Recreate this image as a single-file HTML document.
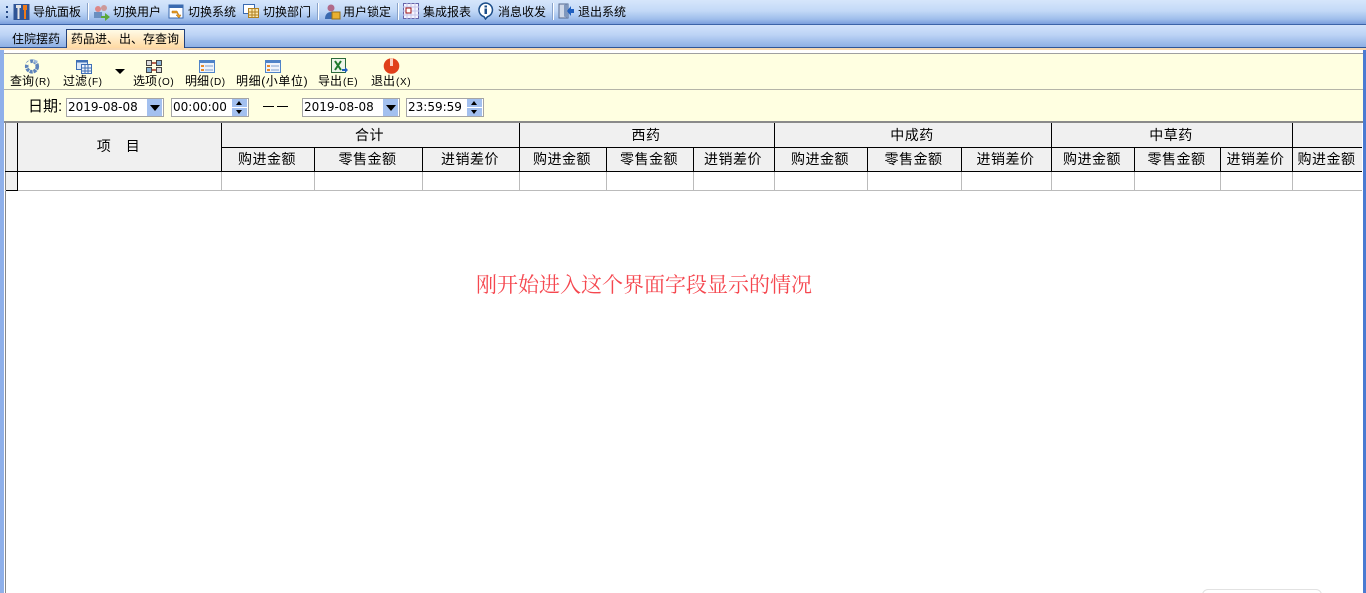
<!DOCTYPE html>
<html><head><meta charset="utf-8">
<style>
html,body{margin:0;padding:0;width:1366px;height:593px;overflow:hidden;background:#fff}
body{position:relative;font-family:"Liberation Sans","WenQuanYi Zen Hei","Noto Sans CJK SC",sans-serif;font-size:12px;color:#000}
.a{position:absolute}
.t{position:absolute;white-space:nowrap;line-height:14px;font-size:12px}
.t span{font-size:10px;letter-spacing:.6px;margin-left:1px}
.sep{position:absolute;top:3px;width:1px;height:17px;background:#8aa3c9;border-right:1px solid #fff}
.r{position:absolute;text-align:center;font-size:14px;letter-spacing:.5px;margin-left:-1px;white-space:nowrap;line-height:16px}
.l{position:absolute}
.inp{position:absolute;top:98px;height:17px;background:#fff;border:1px solid #a5a5a5;font-family:"DejaVu Sans",sans-serif;font-size:12px;line-height:17px;overflow:hidden;white-space:nowrap}
.dd{position:absolute;background:#a3c0ef;width:15px;height:17px}
.dd:after{content:"";position:absolute;left:3px;top:6px;border-left:5px solid transparent;border-right:5px solid transparent;border-top:6px solid #000}
.sp{position:absolute;width:15px;height:8px;background:#a3c0ef}
.up:after{content:"";position:absolute;left:4px;top:2px;border-left:3px solid transparent;border-right:3px solid transparent;border-bottom:4px solid #000}
.dn:after{content:"";position:absolute;left:4px;top:2px;border-left:3px solid transparent;border-right:3px solid transparent;border-top:4px solid #000}
svg{position:absolute}
</style></head><body>
<!-- top toolbar -->
<div class="a" style="left:0;top:0;width:1366px;height:24px;background:linear-gradient(#d6e6fb,#c3d9f7 45%,#9ebdeb 80%,#7a9fdc);border-bottom:1px solid #3c64a8"></div>
<div class="a" style="left:6px;top:6px;width:2px;height:2px;background:#274a85;box-shadow:0 5px #274a85,0 10px #274a85"></div>
<svg style="left:13px;top:3px" width="17" height="18"><rect x="0.5" y="1" width="16" height="16" fill="#2f5596"/><path d="M3 2h5v3H6.500v11h-2V5H3z" fill="#e4e4e4"/><path d="M10 2h4v5h-1v9h-2V7h-1z" fill="#ee7a1a"/></svg>
<div class="t" style="left:33px;top:5px">导航面板</div>
<div class="sep" style="left:87px"></div>
<svg style="left:93px;top:3px" width="17" height="18"><circle cx="5" cy="6" r="3" fill="#d88"/><circle cx="11" cy="5" r="3" fill="#c99"/><rect x="1" y="9" width="8" height="6" fill="#6a8fc0"/><path d="M8 13h4v-3l5 4-5 4v-3H8z" fill="#5aa83a"/></svg>
<div class="t" style="left:113px;top:5px">切换用户</div>
<svg style="left:168px;top:3px" width="17" height="18"><rect x="1" y="2" width="14" height="13" fill="#fff" stroke="#3a6ab0"/><rect x="1" y="2" width="14" height="3" fill="#3a6ab0"/><path d="M4 8h5l2 4h2l-2 3-3-3h2l-1-2H4z" fill="#f0a020" stroke="#a86a10" stroke-width=".5"/></svg>
<div class="t" style="left:188px;top:5px">切换系统</div>
<svg style="left:243px;top:3px" width="17" height="16"><rect x="0.5" y="1.5" width="11" height="9" fill="#fff" stroke="#3a6ab0"/><rect x="5.5" y="5.5" width="10" height="9" fill="#fde9b0" stroke="#b08020"/><path d="M6 9h9M6 12h9M9 6v8M12 6v8" stroke="#b08020"/></svg>
<div class="t" style="left:263px;top:5px">切换部门</div>
<div class="sep" style="left:317px"></div>
<svg style="left:323px;top:3px" width="18" height="17"><circle cx="8" cy="5" r="3.5" fill="#b06a8a"/><path d="M2 16c0-5 3-7 6-7s5 2 5 7z" fill="#3a6ab0"/><rect x="9" y="9" width="8" height="7" fill="#e9b030" stroke="#96701a"/></svg>
<div class="t" style="left:343px;top:5px">用户锁定</div>
<div class="sep" style="left:397px"></div>
<svg style="left:403px;top:3px" width="16" height="16"><rect x="0.5" y="0.5" width="15" height="15" fill="#f4f4ff" stroke="#6666aa"/><path d="M0 4h16M0 8h16M0 12h16M4 0v16M8 0v16M12 0v16" stroke="#c5c5e8"/><rect x="3" y="5" width="5" height="5" fill="#fff" stroke="#a01010"/></svg>
<div class="t" style="left:423px;top:5px">集成报表</div>
<svg style="left:477px;top:2px" width="17" height="18"><path d="M8.500 1a7 7 0 0 1 2 13.700L8.500 17 7 14.700A7 7 0 0 1 8.500 1z" fill="#fff" stroke="#1d4f8a" stroke-width="1.500"/><rect x="7.500" y="3.500" width="2.500" height="2" fill="#1d4f8a"/><rect x="7.500" y="6.500" width="2.500" height="5.500" fill="#1d4f8a"/></svg>
<div class="t" style="left:498px;top:5px">消息收发</div>
<div class="sep" style="left:552px"></div>
<svg style="left:558px;top:2px" width="17" height="18"><rect x="1" y="2" width="9" height="14" fill="#cfd8e8" stroke="#55698f"/><path d="M10 2v14l-4-1.500V3z" fill="#7f97bd"/><path d="M16 7h-3V4l-4 5 4 5v-3h3z" fill="#1f5fc0"/></svg>
<div class="t" style="left:578px;top:5px">退出系统</div>
<!-- tab bar -->
<div class="a" style="left:0;top:25px;width:1366px;height:22px;background:linear-gradient(#d2e3fb,#bcd3f5 45%,#8eafe4);border-bottom:1px solid #2f5597"></div>
<div class="t" style="left:12px;top:32px">住院摆药</div>
<div class="a" style="left:66px;top:29px;width:117px;height:18px;background:linear-gradient(#fffbe6,#ffd9a3);border:1px solid #22407a;border-bottom:none"></div>
<div class="t" style="left:71px;top:32px">药品进、出、存查询</div>
<!-- body frame -->
<div class="a" style="left:0;top:48px;width:1366px;height:545px;background:#8fb0ea"></div>
<div class="a" style="left:4px;top:48px;width:1359px;height:545px;background:#fff"></div>
<div class="a" style="left:1363px;top:48px;width:3px;height:545px;background:#4a7bd2"></div>
<div class="a" style="left:0;top:48px;width:1366px;height:2px;background:#f8d8b0"></div>
<div class="a" style="left:4px;top:50px;width:1359px;height:3px;background:#fff;border-bottom:1px solid #a0a0a0"></div>
<div class="a" style="left:4px;top:54px;width:1359px;height:35px;background:#ffffe1"></div>
<div class="a" style="left:4px;top:89px;width:1359px;height:1px;background:#b5b5a8"></div>
<div class="a" style="left:4px;top:90px;width:1359px;height:31px;background:#ffffe1"></div>
<div class="a" style="left:4px;top:121px;width:1359px;height:2px;background:#8a8a8a"></div>
<!-- toolbar icons -->
<svg style="left:24px;top:59px" width="16" height="15"><circle cx="8" cy="7.500" r="5.300" fill="none" stroke="#5d83bb" stroke-width="3.600" stroke-dasharray="3 .8"/><path d="M1 5l5-4 1 5z" fill="#ffffe1"/><path d="M9 0l5 2-3 3z" fill="#9db9dc"/></svg>
<div class="t" style="left:10px;top:74px">查询<span>(R)</span></div>
<svg style="left:76px;top:59px" width="16" height="15"><rect x="0.500" y="1.500" width="11" height="9" fill="#dde8f8" stroke="#3f6fb5"/><rect x="0.500" y="1.500" width="11" height="2" fill="#3f6fb5"/><rect x="5.500" y="5.500" width="10" height="9" fill="#eef3fb" stroke="#3f6fb5"/><path d="M6 9h9M6 12h9M9 6v8M12 6v8" stroke="#3f6fb5"/></svg>
<div class="t" style="left:63px;top:74px">过滤<span>(F)</span></div>
<div class="a" style="left:115px;top:69px;border-left:5px solid transparent;border-right:5px solid transparent;border-top:5px solid #000"></div>
<svg style="left:146px;top:59px" width="16" height="15"><rect x="0.500" y="1.500" width="5" height="5" fill="#ddd" stroke="#444"/><rect x="10.500" y="1.500" width="5" height="5" fill="#8ab4d8" stroke="#444"/><rect x="0.500" y="8.500" width="5" height="5" fill="#8ab4d8" stroke="#444"/><rect x="10.500" y="8.500" width="5" height="5" fill="#ddd" stroke="#444"/><path d="M6 4h4M6 11h4" stroke="#a03020" stroke-width="1.500"/></svg>
<div class="t" style="left:133px;top:74px">选项<span>(O)</span></div>
<svg style="left:199px;top:60px" width="16" height="13"><rect x="0.500" y="0.500" width="15" height="12" fill="#eef3fb" stroke="#4f83c8"/><rect x="1" y="1" width="14" height="2" fill="#4f83c8"/><rect x="2" y="5" width="3" height="2" fill="#e8892a"/><rect x="2" y="9" width="3" height="2" fill="#e8892a"/><path d="M6 6h8M6 10h8" stroke="#7f9fcc"/></svg>
<div class="t" style="left:185px;top:74px">明细<span>(D)</span></div>
<svg style="left:265px;top:60px" width="16" height="13"><rect x="0.500" y="0.500" width="15" height="12" fill="#eef3fb" stroke="#4f83c8"/><rect x="1" y="1" width="14" height="2" fill="#4f83c8"/><rect x="2" y="5" width="3" height="2" fill="#e8892a"/><rect x="2" y="9" width="3" height="2" fill="#e8892a"/><path d="M6 6h8M6 10h8" stroke="#7f9fcc"/></svg>
<div class="t" style="left:236px;top:74px;letter-spacing:.6px">明细(小单位)</div>
<svg style="left:331px;top:58px" width="17" height="16"><rect x="0.500" y="0.500" width="14" height="14" fill="#eef5ea" stroke="#2c6a3a"/><path d="M4 3l6 9M10 3l-6 9" stroke="#1d7a2c" stroke-width="2"/><path d="M11 11h3V9l3 3-3 3v-2h-3z" fill="#1f5fc0"/></svg>
<div class="t" style="left:318px;top:74px">导出<span>(E)</span></div>
<svg style="left:383px;top:58px" width="17" height="16"><circle cx="8.500" cy="8" r="7.800" fill="#e0401a"/><rect x="7" y="0.500" width="3" height="7.500" fill="#fbd2c2"/></svg>
<div class="t" style="left:371px;top:74px">退出<span>(X)</span></div>
<!-- date row -->
<div class="t" style="left:28px;top:100px;font-size:15px">日期:</div>
<div class="inp" style="left:66px;width:95px;padding-left:1px">2019-08-08</div><div class="dd" style="left:147px;top:99px"></div>
<div class="inp" style="left:171px;width:75px;padding-left:1px">00:00:00</div><div class="sp up" style="left:232px;top:99px"></div><div class="sp dn" style="left:232px;top:108px"></div>
<div class="a" style="left:263px;top:106px;width:11px;height:1px;background:#000"></div>
<div class="a" style="left:277px;top:106px;width:11px;height:1px;background:#000"></div>
<div class="inp" style="left:302px;width:95px;padding-left:1px">2019-08-08</div><div class="dd" style="left:383px;top:99px"></div>
<div class="inp" style="left:406px;width:75px;padding-left:1px">23:59:59</div><div class="sp up" style="left:467px;top:99px"></div><div class="sp dn" style="left:467px;top:108px"></div>
<!-- grid -->
<div class="a" style="left:5px;top:123px;width:1357px;height:48px;background:#f0f0f0"></div>
<div class="a" style="left:6px;top:172px;width:11px;height:18px;background:#f0f0f0"></div>
<div class="a" style="left:5px;top:123px;width:1px;height:470px;background:#888"></div>
<div class="l" style="left:17px;top:123px;width:1px;height:68px;background:#000"></div>
<div class="l" style="left:221px;top:123px;width:1px;height:48px;background:#000"></div>
<div class="l" style="left:519px;top:123px;width:1px;height:48px;background:#000"></div>
<div class="l" style="left:774px;top:123px;width:1px;height:48px;background:#000"></div>
<div class="l" style="left:1051px;top:123px;width:1px;height:48px;background:#000"></div>
<div class="l" style="left:1292px;top:123px;width:1px;height:48px;background:#000"></div>
<div class="l" style="left:314px;top:147px;width:1px;height:24px;background:#000"></div>
<div class="l" style="left:422px;top:147px;width:1px;height:24px;background:#000"></div>
<div class="l" style="left:606px;top:147px;width:1px;height:24px;background:#000"></div>
<div class="l" style="left:693px;top:147px;width:1px;height:24px;background:#000"></div>
<div class="l" style="left:867px;top:147px;width:1px;height:24px;background:#000"></div>
<div class="l" style="left:961px;top:147px;width:1px;height:24px;background:#000"></div>
<div class="l" style="left:1134px;top:147px;width:1px;height:24px;background:#000"></div>
<div class="l" style="left:1220px;top:147px;width:1px;height:24px;background:#000"></div>
<div class="l" style="left:222px;top:147px;width:1140px;height:1px;background:#000"></div>
<div class="l" style="left:5px;top:171px;width:1357px;height:1px;background:#000"></div>
<div class="l" style="left:5px;top:190px;width:1357px;height:1px;background:#bbb"></div>
<div class="l" style="left:6px;top:190px;width:12px;height:1px;background:#000"></div>
<div class="l" style="left:221px;top:172px;width:1px;height:18px;background:#bbb"></div>
<div class="l" style="left:314px;top:172px;width:1px;height:18px;background:#bbb"></div>
<div class="l" style="left:422px;top:172px;width:1px;height:18px;background:#bbb"></div>
<div class="l" style="left:519px;top:172px;width:1px;height:18px;background:#bbb"></div>
<div class="l" style="left:606px;top:172px;width:1px;height:18px;background:#bbb"></div>
<div class="l" style="left:693px;top:172px;width:1px;height:18px;background:#bbb"></div>
<div class="l" style="left:774px;top:172px;width:1px;height:18px;background:#bbb"></div>
<div class="l" style="left:867px;top:172px;width:1px;height:18px;background:#bbb"></div>
<div class="l" style="left:961px;top:172px;width:1px;height:18px;background:#bbb"></div>
<div class="l" style="left:1051px;top:172px;width:1px;height:18px;background:#bbb"></div>
<div class="l" style="left:1134px;top:172px;width:1px;height:18px;background:#bbb"></div>
<div class="l" style="left:1220px;top:172px;width:1px;height:18px;background:#bbb"></div>
<div class="l" style="left:1292px;top:172px;width:1px;height:18px;background:#bbb"></div>
<div class="r" style="left:18px;top:138px;width:203px">项　目</div>
<div class="r" style="left:222px;top:127px;width:297px">合计</div>
<div class="r" style="left:520px;top:127px;width:254px">西药</div>
<div class="r" style="left:775px;top:127px;width:276px">中成药</div>
<div class="r" style="left:1052px;top:127px;width:240px">中草药</div>
<div class="r" style="left:222px;top:151px;width:92px">购进金额</div>
<div class="r" style="left:315px;top:151px;width:107px">零售金额</div>
<div class="r" style="left:423px;top:151px;width:96px">进销差价</div>
<div class="r" style="left:520px;top:151px;width:86px">购进金额</div>
<div class="r" style="left:607px;top:151px;width:86px">零售金额</div>
<div class="r" style="left:694px;top:151px;width:80px">进销差价</div>
<div class="r" style="left:775px;top:151px;width:92px">购进金额</div>
<div class="r" style="left:868px;top:151px;width:93px">零售金额</div>
<div class="r" style="left:962px;top:151px;width:89px">进销差价</div>
<div class="r" style="left:1052px;top:151px;width:82px">购进金额</div>
<div class="r" style="left:1135px;top:151px;width:85px">零售金额</div>
<div class="r" style="left:1221px;top:151px;width:71px">进销差价</div>
<div class="r" style="left:1293px;top:151px;width:69px">购进金额</div>
<div class="a" style="left:476px;top:272px;font-family:'Liberation Serif','Noto Serif CJK SC',serif;font-size:21px;line-height:26px;color:#f5474f;white-space:nowrap">刚开始进入这个界面字段显示的情况</div>
<div class="a" style="left:1202px;top:589px;width:118px;height:10px;border:1px solid #e2e2e2;border-radius:8px;background:#fff"></div>
</body></html>
